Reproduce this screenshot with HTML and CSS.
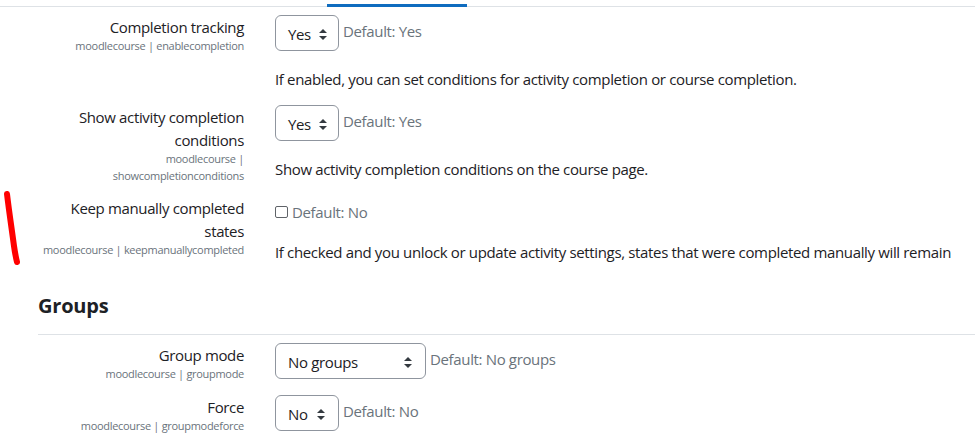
FILE: index.html
```html
<!DOCTYPE html>
<html lang="en">
<head>
    <meta charset="UTF-8">
    <meta name="viewport" content="width=device-width, initial-scale=1.0">
    <title>Course default settings</title>
    <link rel="stylesheet" href="styles.css">
</head>
<body>
    <div class="tabs">
        <div class="tab-active"></div>
    </div>

    <svg class="mark" width="30" height="80" viewBox="0 0 30 80">
        <path d="M5 3 C7 20, 10 40, 12 55 C13 62, 14 67, 15 71" stroke="#f00" stroke-width="6" stroke-linecap="round" fill="none"/>
    </svg>

    <div class="settings">
        <div class="fitem first">
            <div class="flabel">
                <div class="ltext">Completion tracking</div>
                <div class="lsmall">moodlecourse | enablecompletion</div>
            </div>
            <div class="fctrl">
                <div class="fline">
                    <div class="select w-yes">Yes <span class="arrows"></span></div>
                    <span class="defaultinfo">Default: Yes</span>
                </div>
                <div class="desc">If enabled, you can set conditions for activity completion or course completion.</div>
            </div>
        </div>

        <div class="fitem">
            <div class="flabel">
                <div class="ltext">Show activity completion conditions</div>
                <div class="lsmall">moodlecourse | showcompletionconditions</div>
            </div>
            <div class="fctrl">
                <div class="fline">
                    <div class="select w-yes">Yes <span class="arrows"></span></div>
                    <span class="defaultinfo">Default: Yes</span>
                </div>
                <div class="desc">Show activity completion conditions on the course page.</div>
            </div>
        </div>

        <div class="fitem check-item">
            <div class="flabel">
                <div class="ltext">Keep manually completed states</div>
                <div class="lsmall">moodlecourse | keepmanuallycompleted</div>
            </div>
            <div class="fctrl">
                <div class="fline check-line">
                    <span class="checkbox"></span>
                    <span class="defaultinfo">Default: No</span>
                </div>
                <div class="desc">If checked and you unlock or update activity settings, states that were completed manually will remain</div>
            </div>
        </div>

        <h3 class="section-title">Groups</h3>
        <div class="section-rule"></div>

        <div class="fitem">
            <div class="flabel">
                <div class="ltext">Group mode</div>
                <div class="lsmall">moodlecourse | groupmode</div>
            </div>
            <div class="fctrl">
                <div class="fline">
                    <div class="select w-groups">No groups <span class="arrows"></span></div>
                    <span class="defaultinfo">Default: No groups</span>
                </div>
            </div>
        </div>

        <div class="fitem force-item">
            <div class="flabel">
                <div class="ltext">Force</div>
                <div class="lsmall">moodlecourse | groupmodeforce</div>
            </div>
            <div class="fctrl">
                <div class="fline">
                    <div class="select w-no">No <span class="arrows"></span></div>
                    <span class="defaultinfo">Default: No</span>
                </div>
            </div>
        </div>
    </div>
</body>
</html>
```

FILE: styles.css
```css
body {
    margin: 0;
    font-family: "Open Sans", "Noto Sans", sans-serif;
    font-size: 15px;
    letter-spacing: -0.35px;
    color: #1d2125;
    background-color: #fff;
    overflow: hidden;
}
.tabs {
    height: 7px;
    box-sizing: border-box;
    padding: 4px 0 0 327px;
    border-bottom: 1px solid #dee2e6;
}
.tab-active {
    width: 140px;
    height: 3px;
    background-color: #0f6cbf;
}
.mark {
    position: absolute;
    left: 2px;
    top: 191px;
}
.settings {
    padding-left: 36px;
}
.fitem {
    display: flex;
    margin-bottom: 15px;
}
.fitem.first {
    margin-top: 8px;
}
.flabel {
    width: 208px;
    flex-shrink: 0;
    text-align: right;
    padding-top: 1px;
}
.ltext {
    line-height: 23px;
}
.lsmall {
    font-size: 11px;
    letter-spacing: -0.3px;
    line-height: 17px;
    margin-top: -2px;
    color: #6a737b;
}
.fctrl {
    padding-left: 31px;
}
.fline {
    display: flex;
    align-items: flex-start;
}
.select {
    height: 36px;
    box-sizing: border-box;
    border: 1px solid #8f959e;
    border-radius: 6px;
    padding: 2px 12px 0;
    display: flex;
    align-items: center;
    justify-content: space-between;
    color: #1d2125;
}
.w-yes { width: 64px; }
.w-no { width: 64px; }
.w-groups { width: 151px; }
.arrows {
    display: inline-block;
    width: 9px;
    height: 11px;
    margin-left: 8px;
    position: relative;
}
.arrows::before,
.arrows::after {
    content: "";
    position: absolute;
    left: 0;
    border-left: 4.5px solid transparent;
    border-right: 4.5px solid transparent;
}
.arrows::before {
    top: 0;
    border-bottom: 4.5px solid #343a40;
}
.arrows::after {
    bottom: 0;
    border-top: 4.5px solid #343a40;
}
.defaultinfo {
    color: #6a737b;
    margin-left: 4px;
    line-height: 22px;
    padding-top: 5px;
}
.desc {
    margin-top: 17px;
    line-height: 22px;
    white-space: nowrap;
}
.check-item {
    margin-top: -3px;
}
.check-line {
    align-items: center;
    padding-top: 5px;
}
.check-line .defaultinfo {
    padding-top: 0;
}
.checkbox {
    width: 13px;
    height: 12px;
    box-sizing: border-box;
    border: 1px solid #5f6368;
    border-radius: 2px;
}
.check-item .desc {
    margin-top: 18px;
}
.force-item {
    margin-top: -2px;
}
.section-title {
    font-size: 20px;
    font-weight: 700;
    letter-spacing: -0.2px;
    margin: 30px 0 0 2px;
    line-height: 26px;
}
.section-rule {
    border-top: 1px solid #dee2e6;
    margin: 15px 0 8px 2px;
}
```
